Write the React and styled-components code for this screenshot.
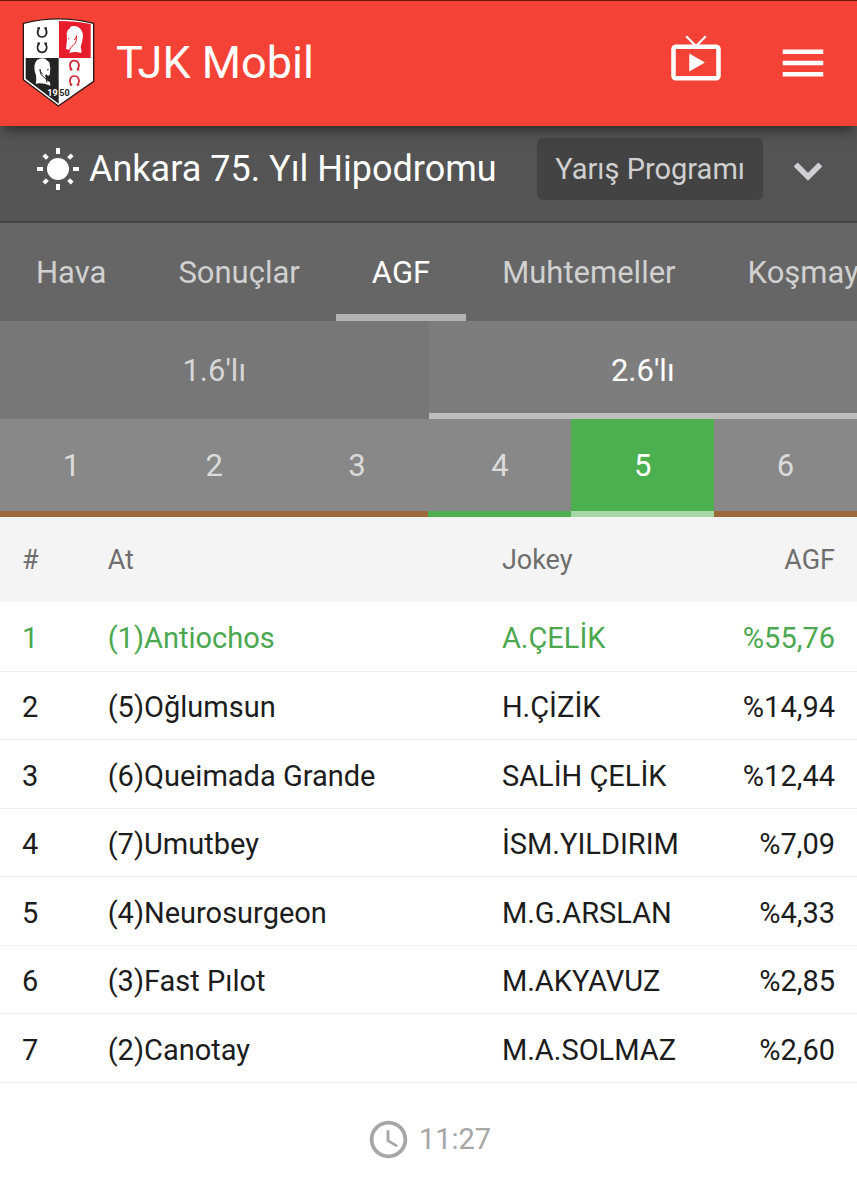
import React, {useState} from 'react';
import styled, {createGlobalStyle} from 'styled-components';
import {MdLiveTv, MdMenu, MdExpandMore, MdAccessTime} from 'react-icons/md';

const GlobalStyle = createGlobalStyle`
  * {
    box-sizing: border-box;
  }
  body {
    margin: 0;
    background: #fff;
    color: #1c1c1c;
    font-family: Roboto, "Noto Sans", sans-serif;
  }
  button {
    margin: 0;
    padding: 0;
    border: 0;
    background: none;
    color: inherit;
    font: inherit;
    cursor: pointer;
  }
`;

const Page = styled.div`
  min-height: 100vh;
  overflow-x: hidden;
`;

const Header = styled.header`
  position: relative;
  z-index: 1;
  display: flex;
  align-items: center;
  height: 126px;
  padding: 0 27px 2px 22px;
  border-top: 1px solid #6a120c;
  background: #f44336;
  color: #fff;
  box-shadow: 0 8px 12px -4px rgba(0, 0, 0, 0.5);
`;

const Title = styled.h1`
  flex: 1;
  margin: 0 0 0 21px;
  font-size: 45px;
  font-weight: 400;
  line-height: 52px;
`;

const HeaderActions = styled.div`
  display: flex;
  align-items: center;
  gap: 53px;
`;

const IconButton = styled.button`
  display: flex;
  padding-bottom: ${({$lift}) => $lift || 0}px;
`;

const Venue = styled.section`
  display: flex;
  align-items: center;
  height: 97px;
  padding: 0 22px 10px 37px;
  border-bottom: 2px solid #444;
  background: #545454;
  color: #fff;
`;

const VenueName = styled.h2`
  flex: 1;
  margin: 0 0 0 10px;
  font-size: 36px;
  font-weight: 400;
  line-height: 44px;
  white-space: nowrap;
`;

const ProgramButton = styled.button`
  height: 62px;
  margin-right: 18px;
  padding: 0 18px;
  border-radius: 6px;
  background: #434343;
  color: #d0d0d0;
  font-size: 29px;
  white-space: nowrap;
`;

const Chevron = styled(IconButton)`
  padding-top: 4px;
  color: #d0d0d6;

  path:last-child {
    stroke: currentColor;
    stroke-width: 0.5;
  }
`;

const Tabs = styled.nav`
  display: flex;
  height: 98px;
  overflow: hidden;
  background: #666;
`;

const Tab = styled.button`
  flex: none;
  padding: 8px 36px 0;
  border-bottom: 7px solid ${({$active}) => ($active ? '#b3b3b3' : 'transparent')};
  color: ${({$active}) => ($active ? '#fff' : '#d1d1d1')};
  font-size: 31px;
`;

const SubTabs = styled.div`
  display: flex;
  height: 98px;
`;

const SubTab = styled.button`
  flex: 1;
  padding-top: 6px;
  border-bottom: 6px solid ${({$active}) => ($active ? '#bebebe' : '#777')};
  background: ${({$active}) => ($active ? '#7d7d7d' : '#777')};
  color: ${({$active}) => ($active ? '#fff' : '#d6d6d6')};
  font-size: 31px;
`;

const trackColors = {sand: '#9b693a', grass: '#4caf50'};

const Leg = styled.button`
  flex: 1;
  border-bottom: 6px solid ${({$active, $track}) => ($active ? '#a5d7a7' : trackColors[$track])};
  background: ${({$active, $track}) => ($active ? trackColors[$track] : '#888')};
  color: ${({$active}) => ($active ? '#fff' : '#dbdbdb')};
  font-size: 31px;
`;

const Table = styled.table`
  width: 100%;
  border-collapse: collapse;
  table-layout: fixed;
`;

const Th = styled.th`
  width: ${({$width}) => $width || 'auto'};
  height: 85px;
  padding: 0 22px;
  background: #f4f4f4;
  color: #6e6e6e;
  font-size: 27px;
  font-weight: 400;
  text-align: ${({$right}) => ($right ? 'right' : 'left')};
`;

const Row = styled.tr`
  height: 69px;
  border-bottom: 1px solid #efefef;
  color: ${({$leader}) => ($leader ? '#4ca750' : 'inherit')};

  &:nth-child(even) {
    height: 68px;
  }
`;

const Td = styled.td`
  padding: 4px 22px 0;
  font-size: 29px;
  text-align: ${({$right}) => ($right ? 'right' : 'left')};
  white-space: nowrap;
`;

const Updated = styled.footer`
  display: flex;
  align-items: center;
  justify-content: center;
  gap: 8px;
  padding-top: 34px;
  color: #a6a6a6;
  font-size: 29px;
  line-height: 45px;
`;

const Logo = () => (
  <svg width="73" height="89" viewBox="21 25 219 267" role="img" aria-label="TJK">
    <path d="M25 41Q130 14 236 41V215L130 289L25 210Z" fill="#fff" stroke="#2a1513" strokeWidth="4" />
    <path d="M132 34Q184 34 227 43V145H132Z" fill="#e71d2b" />
    <path d="M32 145H131V282L32 207Z" fill="#242424" />
    <path
      d="M163 130L166 120Q157 121 153 117L156 92L155 71L159 60L164 57L166 51Q176 47 188 51Q202 58 204 77Q203 96 197 112L200 126L197 130Q184 124 163 130Z"
      fill="#fff"
    />
    <path d="M184 78Q187 97 174 108Q164 114 164 122M184 78Q186 85 177 91M159 88L163 86" fill="none" stroke="#e71d2b" strokeWidth="3" />
    <path
      d="M62 222Q67 206 59 184Q56 162 66 151Q77 144 91 147L97 153L103 158L106 177L104 196L99 199L95 194L90 197L94 211L105 218L106 228Q83 218 62 222Z"
      fill="#fff"
    />
    <path d="M75 179Q75 197 88 203Q95 208 96 219M75 179Q75 187 83 194M96 181L101 179" fill="none" stroke="#242424" strokeWidth="3" />
    <g fill="none" strokeWidth="5">
      <path d="M73 55C62 69 70 82 81 82S101 69 90 55M67 55H75M88 55H96" stroke="#242424" />
      <path d="M73 101C62 115 70 128 81 128S101 115 90 101M67 101H75M88 101H96" stroke="#242424" />
      <path d="M170 180C159 166 167 153 178 153S198 166 187 180M164 180H172M185 180H193" stroke="#cf2b36" />
      <path d="M170 226C159 212 167 199 178 199S198 212 187 226M164 226H172M185 226H193" stroke="#cf2b36" />
    </g>
    <text x="97" y="260" fontSize="27" fontWeight="700" fill="#fff">19</text>
    <text x="133" y="260" fontSize="27" fontWeight="700" fill="#242424">50</text>
  </svg>
);

const SunIcon = () => (
  <svg width="42" height="42" viewBox="0 0 42 42" fill="#fff" aria-hidden="true">
    <circle cx="21" cy="21" r="11" />
    {[0, 90, 180, 270].map((angle) => (
      <rect key={angle} x="19" y="0" width="4" height="6" transform={`rotate(${angle} 21 21)`} />
    ))}
    {[45, 135, 225, 315].map((angle) => (
      <rect key={angle} x="19" y="1" width="4" height="5" transform={`rotate(${angle} 21 21)`} />
    ))}
  </svg>
);

const tabs = ['Hava', 'Sonuçlar', 'AGF', 'Muhtemeller', 'Koşmayanlar'];
const bets = ["1.6'lı", "2.6'lı"];
const legs = ['sand', 'sand', 'sand', 'grass', 'grass', 'sand'];

const horses = [
  {name: '(1)Antiochos', jockey: 'A.ÇELİK', agf: '%55,76'},
  {name: '(5)Oğlumsun', jockey: 'H.ÇİZİK', agf: '%14,94'},
  {name: '(6)Queimada Grande', jockey: 'SALİH ÇELİK', agf: '%12,44'},
  {name: '(7)Umutbey', jockey: 'İSM.YILDIRIM', agf: '%7,09'},
  {name: '(4)Neurosurgeon', jockey: 'M.G.ARSLAN', agf: '%4,33'},
  {name: '(3)Fast Pılot', jockey: 'M.AKYAVUZ', agf: '%2,85'},
  {name: '(2)Canotay', jockey: 'M.A.SOLMAZ', agf: '%2,60'},
];

const App = () => {
  const [tab, setTab] = useState('AGF');
  const [bet, setBet] = useState(1);
  const [leg, setLeg] = useState(4);

  return (
    <Page>
      <GlobalStyle />
      <Header>
        <Logo />
        <Title>TJK Mobil</Title>
        <HeaderActions>
          <IconButton $lift={10} aria-label="Canlı yayın"><MdLiveTv size={54} /></IconButton>
          <IconButton aria-label="Menü"><MdMenu size={54} /></IconButton>
        </HeaderActions>
      </Header>

      <Venue>
        <SunIcon />
        <VenueName>Ankara 75. Yıl Hipodromu</VenueName>
        <ProgramButton>Yarış Programı</ProgramButton>
        <Chevron aria-label="Hipodrom seç"><MdExpandMore size={54} /></Chevron>
      </Venue>

      <Tabs>
        {tabs.map((name) => (
          <Tab key={name} $active={name === tab} onClick={() => setTab(name)}>{name}</Tab>
        ))}
      </Tabs>

      <SubTabs>
        {bets.map((name, i) => (
          <SubTab key={name} $active={i === bet} onClick={() => setBet(i)}>{name}</SubTab>
        ))}
      </SubTabs>

      <SubTabs>
        {legs.map((track, i) => (
          <Leg key={i} $track={track} $active={i === leg} onClick={() => setLeg(i)}>{i + 1}</Leg>
        ))}
      </SubTabs>

      <Table>
        <thead>
          <tr>
            <Th $width="10%">#</Th>
            <Th $width="46%">At</Th>
            <Th>Jokey</Th>
            <Th $width="19%" $right>AGF</Th>
          </tr>
        </thead>
        <tbody>
          {horses.map((horse, i) => (
            <Row key={horse.name} $leader={i === 0}>
              <Td>{i + 1}</Td>
              <Td>{horse.name}</Td>
              <Td>{horse.jockey}</Td>
              <Td $right>{horse.agf}</Td>
            </Row>
          ))}
        </tbody>
      </Table>

      <Updated>
        <MdAccessTime size={45} />
        <span>11:27</span>
      </Updated>
    </Page>
  );
}

export default App;
